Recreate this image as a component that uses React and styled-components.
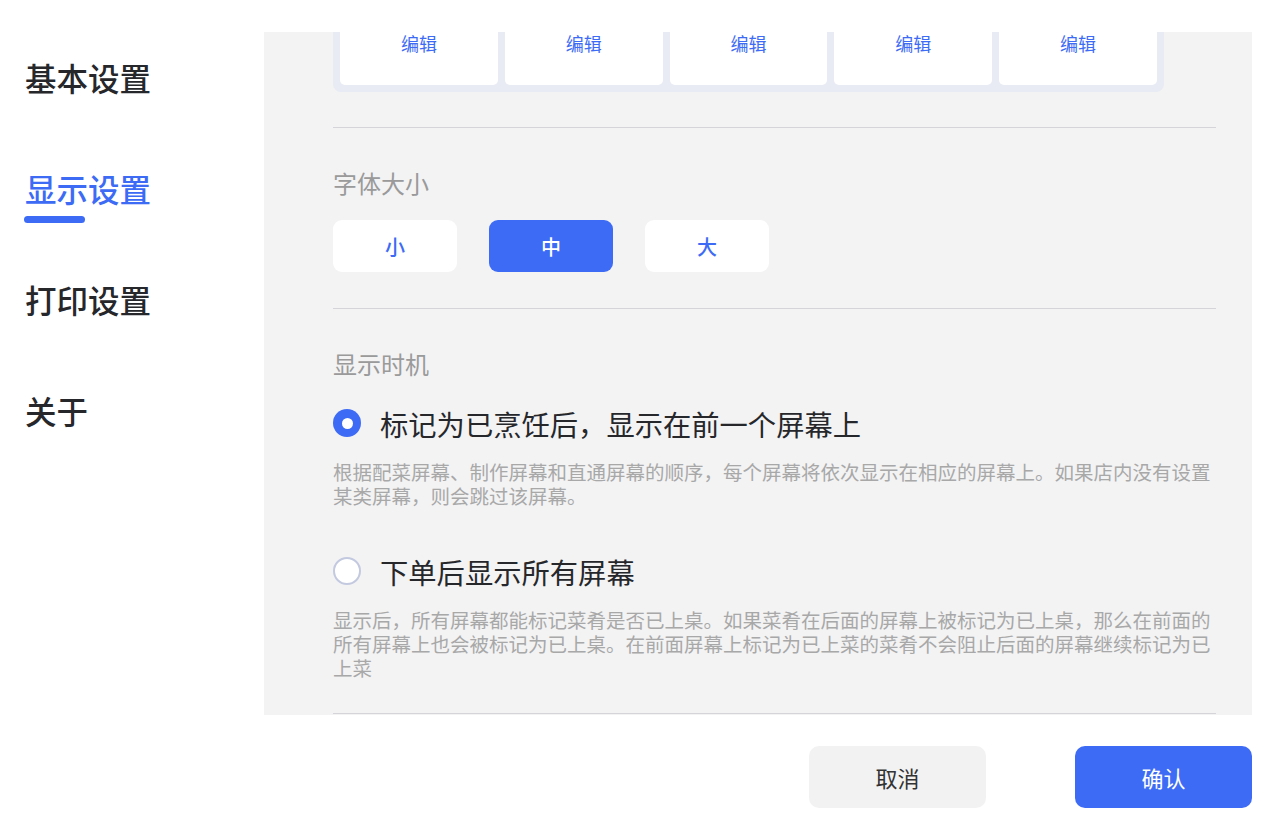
import React, { useState } from 'react'
import styled, { createGlobalStyle } from 'styled-components'

const GlobalStyle = createGlobalStyle`
  html, body {
    margin: 0;
    padding: 0;
    background: #fff;
    font-family: "Noto Sans CJK SC", "Noto Sans", sans-serif;
  }
  * { box-sizing: border-box; }
`

const BLUE = '#3d6bf5'

const navItems = ['基本设置', '显示设置', '打印设置', '关于']
const sizes = ['小', '中', '大']
const timings = [
  {
    title: '标记为已烹饪后，显示在前一个屏幕上',
    desc: '根据配菜屏幕、制作屏幕和直通屏幕的顺序，每个屏幕将依次显示在相应的屏幕上。如果店内没有设置某类屏幕，则会跳过该屏幕。',
  },
  {
    title: '下单后显示所有屏幕',
    desc: '显示后，所有屏幕都能标记菜肴是否已上桌。如果菜肴在后面的屏幕上被标记为已上桌，那么在前面的所有屏幕上也会被标记为已上桌。在前面屏幕上标记为已上菜的菜肴不会阻止后面的屏幕继续标记为已上菜',
  },
]

const App = () => {
  const [active] = useState(1)
  const [size, setSize] = useState(1)
  const [timing, setTiming] = useState(0)

  return (
    <>
      <GlobalStyle />
      <StPage>
        <StSidebar>
          {navItems.map((item, i) => (
            <StNavItem key={item} $active={i === active}>
              {item}
            </StNavItem>
          ))}
        </StSidebar>
        <StMain>
          <StPanel>
            <StCardTray>
              {[0, 1, 2, 3, 4].map((i) => (
                <StCard key={i}>编辑</StCard>
              ))}
            </StCardTray>
            <StDivider />
            <StSection>
              <StLabel>字体大小</StLabel>
              <StSizeRow>
                {sizes.map((s, i) => (
                  <StSizeButton key={s} $active={i === size} onClick={() => setSize(i)}>
                    {s}
                  </StSizeButton>
                ))}
              </StSizeRow>
            </StSection>
            <StDivider />
            <StSection>
              <StLabel>显示时机</StLabel>
              {timings.map((t, i) => (
                <StOption key={t.title}>
                  <StRadioRow onClick={() => setTiming(i)}>
                    <StRadio $checked={i === timing} />
                    <StOptionTitle>{t.title}</StOptionTitle>
                  </StRadioRow>
                  <StOptionDesc>{t.desc}</StOptionDesc>
                </StOption>
              ))}
            </StSection>
            <StDivider $gap={33} />
          </StPanel>
          <StFooter>
            <StFooterButton>取消</StFooterButton>
            <StFooterButton $primary>确认</StFooterButton>
          </StFooter>
        </StMain>
      </StPage>
    </>
  )
}

export default App

const StPage = styled.div`
  display: flex;
  width: 1280px;
  height: 818px;
  overflow: hidden;
`

const StSidebar = styled.div`
  width: 264px;
  flex-shrink: 0;
  display: flex;
  flex-direction: column;
  padding: 55px 0 0 25px;
  gap: 67px;
`

const StNavItem = styled.div`
  position: relative;
  font-size: 31.5px;
  font-weight: 500;
  line-height: 44px;
  color: ${(p) => (p.$active ? BLUE : '#26272b')};
  &::after {
    content: '';
    display: ${(p) => (p.$active ? 'block' : 'none')};
    position: absolute;
    left: -1px;
    top: 50px;
    width: 61px;
    height: 7px;
    border-radius: 4px;
    background: ${BLUE};
  }
`

const StMain = styled.div`
  width: 988px;
  display: flex;
  flex-direction: column;
`

const StPanel = styled.div`
  margin-top: 32px;
  height: 683px;
  background: #f3f3f4;
  padding: 0 36px 0 69px;
  overflow: hidden;
  display: flex;
  flex-direction: column;
`

const StCardTray = styled.div`
  width: 831px;
  display: flex;
  gap: 7px;
  padding: 0 7px 7px;
  background: #e8ebf4;
  border-radius: 0 0 8px 8px;
`

const StCard = styled.div`
  width: 158px;
  height: 53px;
  padding-top: 1px;
  background: #fff;
  border-radius: 0 0 5px 5px;
  text-align: center;
  font-size: 18px;
  line-height: 20px;
  color: ${BLUE};
`

const StDivider = styled.div`
  height: 1px;
  background: #d5d5d9;
  margin-top: ${(p) => p.$gap ?? 35}px;
  flex-shrink: 0;
`

const StSection = styled.div`
  display: flex;
  flex-direction: column;
  padding-top: 39px;
`

const StLabel = styled.div`
  font-size: 24px;
  line-height: 32px;
  color: #9a9a9a;
`

const StSizeRow = styled.div`
  display: flex;
  gap: 32px;
  margin-top: 21px;
  margin-bottom: 1px;
`

const StSizeButton = styled.button`
  width: 124px;
  height: 52px;
  border: none;
  border-radius: 9px;
  background: ${(p) => (p.$active ? BLUE : '#fff')};
  color: ${(p) => (p.$active ? '#fff' : BLUE)};
  font-family: inherit;
  font-size: 20px;
  font-weight: 500;
  cursor: pointer;
`

const StOption = styled.div`
  display: flex;
  flex-direction: column;
  margin-top: 23px;
  & + & {
    margin-top: 43px;
  }
`

const StRadioRow = styled.div`
  display: flex;
  align-items: center;
  height: 40px;
  cursor: pointer;
`

const StRadio = styled.span`
  width: 28px;
  height: 28px;
  border-radius: 50%;
  flex-shrink: 0;
  background: ${(p) => (p.$checked ? BLUE : '#fff')};
  border: ${(p) => (p.$checked ? 'none' : '2.5px solid #c3c9df')};
  display: flex;
  align-items: center;
  justify-content: center;
  &::after {
    content: '';
    display: ${(p) => (p.$checked ? 'block' : 'none')};
    width: 11px;
    height: 11px;
    border-radius: 50%;
    background: #fff;
  }
`

const StOptionTitle = styled.span`
  margin-left: 19px;
  font-size: 28.3px;
  color: #26272b;
`

const StOptionDesc = styled.div`
  margin-top: 17px;
  font-size: 19.5px;
  line-height: 24px;
  color: #a8a8a8;
`

const StFooter = styled.div`
  display: flex;
  justify-content: flex-end;
  gap: 89px;
  padding-top: 31px;
`

const StFooterButton = styled.button`
  width: 177px;
  height: 62px;
  border: none;
  border-radius: 10px;
  background: ${(p) => (p.$primary ? BLUE : '#f2f2f3')};
  color: ${(p) => (p.$primary ? '#fff' : '#333')};
  font-family: inherit;
  font-size: 22px;
  cursor: pointer;
`
